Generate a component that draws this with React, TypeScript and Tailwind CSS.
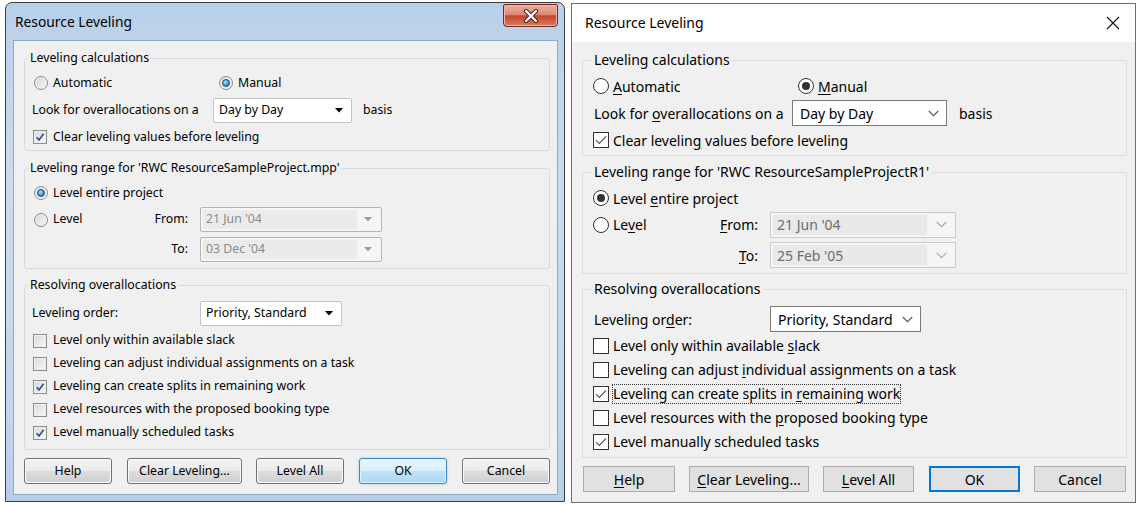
import React from "react";

type Kids = { children?: React.ReactNode };

const U = ({ children }: Kids) => (
  <span className="underline decoration-1 underline-offset-[2px]">{children}</span>
);

/* ---------------- Windows 7 styled controls ---------------- */

function R7({ checked }: { checked?: boolean }) {
  return (
    <span className="flex h-[14px] w-[14px] shrink-0 items-center justify-center rounded-full border border-[#8b8b8b] bg-[linear-gradient(135deg,#d4d4d4,#f8f8f8)] shadow-[inset_0_0_0_1px_#f2f2f2]">
      {checked && (
        <span className="h-[8px] w-[8px] rounded-full border border-[#1b4f86] bg-[radial-gradient(circle_at_40%_35%,#b6e6ff,#3d97d8_55%,#14599a)]" />
      )}
    </span>
  );
}

function C7({ checked }: { checked?: boolean }) {
  return (
    <span className="flex h-[14px] w-[14px] shrink-0 items-center justify-center border border-[#8b8b8b] bg-[linear-gradient(135deg,#d8d8d8,#fafafa)] shadow-[inset_0_0_0_1px_#f0f0f0]">
      {checked && (
        <svg width="10" height="10" viewBox="0 0 10 10">
          <path d="M1.6 5.2 L4 7.9 L8.6 1.8" fill="none" stroke="#33508e" strokeWidth="1.7" />
        </svg>
      )}
    </span>
  );
}

function Combo7({ value, w, disabled }: { value: string; w: string; disabled?: boolean }) {
  if (disabled) {
    return (
      <div className={`flex h-[25px] rounded-[2px] border border-[#b2b6b9] bg-[#f5f5f5] p-[2px] ${w}`}>
        <div className="flex flex-1 items-center bg-[#ebebeb] pl-[3px] text-[#8c8c8c]">{value}</div>
        <div className="flex w-[22px] items-center justify-center">
          <svg width="8" height="5" viewBox="0 0 8 5">
            <path d="M0 0H8L4 4.5Z" fill="#9c9c9c" />
          </svg>
        </div>
      </div>
    );
  }
  return (
    <div className={`flex h-[25px] items-center rounded-[2px] border border-[#c4c4c4] bg-white pl-[5px] pr-[8px] ${w}`}>
      <span className="flex-1">{value}</span>
      <svg width="8" height="5" viewBox="0 0 8 5">
        <path d="M0 0H8L4 4.5Z" fill="#000" />
      </svg>
    </div>
  );
}

function B7({ label, w, ok, ml }: { label: string; w: string; ok?: boolean; ml: string }) {
  return (
    <div
      className={`flex h-[26px] items-center justify-center rounded-[3px] border ${ml} ${w} ${
        ok
          ? "border-[#3c8bc4] bg-[linear-gradient(#e9f6fd,#d9effb_50%,#bfe4f8_50%,#a9d9f3)] shadow-[0_0_3px_#8fd0f2,inset_0_0_0_1px_#dff2fc]"
          : "border-[#707070] bg-[linear-gradient(#f3f3f3,#ebebeb_50%,#dddddd_50%,#cfcfcf)] shadow-[inset_0_0_0_1px_#fbfbfb]"
      }`}
    >
      {label}
    </div>
  );
}

function Win7Dialog() {
  return (
    <div className="ml-[5px] mt-[2px] flex h-[500px] w-[560px] shrink-0 flex-col rounded-t-[7px] border border-[#3d3d3d] bg-[linear-gradient(180deg,#b8d0ea,#cadcf0_35%,#c2d8ee_80%,#b7cfe8)] pb-[6px] pl-[7px] pr-[6px] text-[12.3px] text-black">
      {/* title bar */}
      <div className="flex h-[37px] shrink-0 items-start justify-between">
        <span className="ml-[2px] mt-[10px] text-[13.8px] leading-[18px]">Resource Leveling</span>
        <div className="mt-[1px] flex h-[23px] w-[55px] items-center justify-center rounded-b-[4px] rounded-t-[2px] border border-[#6f2a20] bg-[linear-gradient(#eab0a2,#dc8a76_45%,#c8452f_52%,#d77a5c)] shadow-[inset_0_0_0_1px_#f0b8a8]">
          <svg width="16" height="14" viewBox="0 0 16 14">
            <path d="M3 2 L13 12 M13 2 L3 12" stroke="#4a1b12" strokeWidth="4.2" strokeLinecap="round" />
            <path d="M3 2 L13 12 M13 2 L3 12" stroke="#ffffff" strokeWidth="2.4" strokeLinecap="round" />
          </svg>
        </div>
      </div>

      {/* client */}
      <div className="flex flex-1 flex-col border border-[#94a8bf] bg-[#f0f0f0] pl-[10px] pr-[7px]">
        {/* group 1 */}
        <fieldset className="mt-[8px] h-[102px] rounded-[3px] border border-[#d3dce3]">
          <legend className="ml-[3px] px-[2px] leading-[18px]">Leveling calculations</legend>
          <div className="px-[7px]">
            <div className="mt-[3px] flex h-[26px] items-center">
              <div className="ml-[2px] flex w-[185px] items-center gap-[5px]">
                <R7 />
                <span>Automatic</span>
              </div>
              <div className="flex items-center gap-[5px]">
                <R7 checked />
                <span>Manual</span>
              </div>
            </div>
            <div className="flex h-[28px] items-center">
              <span className="w-[181px]">Look for overallocations on a</span>
              <Combo7 value="Day by Day" w="w-[139px]" />
              <span className="ml-[11px]">basis</span>
            </div>
            <div className="flex h-[26px] items-center gap-[6px] pl-[1px]">
              <C7 checked />
              <span>Clear leveling values before leveling</span>
            </div>
          </div>
        </fieldset>

        {/* group 2 */}
        <fieldset className="mt-[8px] h-[110px] rounded-[3px] border border-[#d3dce3]">
          <legend className="ml-[3px] px-[2px] leading-[18px]">Leveling range for 'RWC ResourceSampleProject.mpp'</legend>
          <div className="px-[7px]">
            <div className="mt-[3px] flex h-[26px] items-center gap-[5px] pl-[2px]">
              <R7 checked />
              <span>Level entire project</span>
            </div>
            <div className="flex h-[27px] items-center">
              <div className="flex w-[156px] items-center justify-between">
                <div className="ml-[2px] flex items-center gap-[5px]">
                  <R7 />
                  <span>Level</span>
                </div>
                <span>From:</span>
              </div>
              <Combo7 value="21 Jun '04" w="ml-[12px] w-[182px]" disabled />
            </div>
            <div className="mt-[3px] flex h-[26px] items-center">
              <span className="w-[156px] text-right">To:</span>
              <Combo7 value="03 Dec '04" w="ml-[12px] w-[182px]" disabled />
            </div>
          </div>
        </fieldset>

        {/* group 3 */}
        <fieldset className="mt-[7px] h-[174px] rounded-[3px] border border-[#d3dce3]">
          <legend className="ml-[3px] px-[2px] leading-[18px]">Resolving overallocations</legend>
          <div className="px-[7px]">
            <div className="mt-[6px] flex h-[26px] items-center">
              <span className="w-[168px]">Leveling order:</span>
              <Combo7 value="Priority, Standard" w="w-[142px]" />
            </div>
            <div className="mt-[3px] flex flex-col">
              {[
                ["Level only within available slack", false],
                ["Leveling can adjust individual assignments on a task", false],
                ["Leveling can create splits in remaining work", true],
                ["Level resources with the proposed booking type", false],
                ["Level manually scheduled tasks", true],
              ].map(([t, c]) => (
                <div key={t as string} className="flex h-[23px] items-center gap-[6px] pl-[1px]">
                  <C7 checked={c as boolean} />
                  <span>{t as string}</span>
                </div>
              ))}
            </div>
          </div>
        </fieldset>

        {/* buttons */}
        <div className="mt-[8px] flex h-[26px]">
          <B7 label="Help" w="w-[88px]" ml="ml-0" />
          <B7 label="Clear Leveling..." w="w-[115px]" ml="ml-[15px]" />
          <B7 label="Level All" w="w-[88px]" ml="ml-[14px]" />
          <B7 label="OK" w="w-[88px]" ml="ml-[15px]" ok />
          <B7 label="Cancel" w="w-[88px]" ml="ml-[15px]" />
        </div>
      </div>
    </div>
  );
}

/* ---------------- Windows 10 styled controls ---------------- */

function R10({ checked }: { checked?: boolean }) {
  return (
    <span className="flex h-[16px] w-[16px] shrink-0 items-center justify-center rounded-full border border-[#333333] bg-white">
      {checked && <span className="h-[8px] w-[8px] rounded-full bg-[#333333]" />}
    </span>
  );
}

function C10({ checked }: { checked?: boolean }) {
  return (
    <span className="flex h-[16px] w-[16px] shrink-0 items-center justify-center border border-[#333333] bg-white">
      {checked && (
        <svg width="14" height="14" viewBox="0 0 14 14">
          <path d="M2 7.2 L5.3 10.5 L12 3.4" fill="none" stroke="#555555" strokeWidth="1.2" />
        </svg>
      )}
    </span>
  );
}

function Chevron({ color }: { color: string }) {
  return (
    <svg width="11" height="7" viewBox="0 0 11 7">
      <path d="M0.8 1 L5.5 5.7 L10.2 1" fill="none" stroke={color} strokeWidth="1.1" />
    </svg>
  );
}

function Combo10({ value, w, disabled }: { value: string; w: string; disabled?: boolean }) {
  if (disabled) {
    return (
      <div className={`flex h-[26px] border border-[#cccccc] bg-[#f5f5f5] p-[2px] ${w}`}>
        <div className="flex flex-1 items-center bg-[#e9e9e9] pl-[4px] text-[#6d6d6d]">{value}</div>
        <div className="flex w-[26px] items-center justify-center pl-[2px]">
          <Chevron color="#a8a8a8" />
        </div>
      </div>
    );
  }
  return (
    <div className={`flex h-[26px] items-center border border-[#7a7a7a] bg-white pl-[7px] pr-[7px] ${w}`}>
      <span className="flex-1">{value}</span>
      <Chevron color="#555555" />
    </div>
  );
}

function B10({ children, w, ok, ml }: { children: React.ReactNode; w: string; ok?: boolean; ml: string }) {
  return (
    <div
      className={`flex h-[26px] items-center justify-center bg-[#e1e1e1] ${ml} ${w} ${
        ok ? "border-2 border-[#0078d7]" : "border border-[#adadad]"
      }`}
    >
      {children}
    </div>
  );
}

function Win10Dialog() {
  const checks: [React.ReactNode, boolean, boolean][] = [
    [<>Level only within available <U>s</U>lack</>, false, false],
    [<>Leveling can adjust <U>i</U>ndividual assignments on a task</>, false, false],
    [<>Leveling can create splits in <U>r</U>emaining work</>, true, true],
    [<>Level resources with the <U>p</U>roposed booking type</>, false, false],
    [<>Level manually scheduled tasks</>, true, false],
  ];
  return (
    <div className="ml-[6px] mt-[3px] flex h-[500px] w-[565px] shrink-0 flex-col border border-[#6f6f6f] bg-white text-[14px] text-black">
      {/* title bar */}
      <div className="flex h-[38px] shrink-0 items-center justify-between">
        <span className="ml-[13px] leading-[20px]">Resource Leveling</span>
        <div className="flex h-full w-[44px] items-center justify-center">
          <svg width="14" height="14" viewBox="0 0 14 14">
            <path d="M1 1 L13 13 M13 1 L1 13" stroke="#111111" strokeWidth="1.1" />
          </svg>
        </div>
      </div>

      {/* client */}
      <div className="flex flex-1 flex-col bg-[#f0f0f0] pl-[10px] pr-[8px]">
        {/* group 1 */}
        <fieldset className="mt-[8px] h-[106px] border border-[#dcdcdc]">
          <legend className="ml-[8px] px-[3px] leading-[20px]">Leveling calculations</legend>
          <div className="px-[10px]">
            <div className="mt-[3px] flex h-[26px] items-center">
              <div className="flex w-[205px] items-center gap-[4px]">
                <R10 />
                <span>
                  <U>A</U>utomatic
                </span>
              </div>
              <div className="flex items-center gap-[4px]">
                <R10 checked />
                <span>
                  <U>M</U>anual
                </span>
              </div>
            </div>
            <div className="flex h-[28px] items-center">
              <span className="w-[199px] pl-[1px]">
                Look for <U>o</U>verallocations on a
              </span>
              <Combo10 value="Day by Day" w="w-[155px]" />
              <span className="ml-[12px]">basis</span>
            </div>
            <div className="flex h-[26px] items-center gap-[4px]">
              <C10 checked />
              <span>
                Clear levelin<U>g</U> values before leveling
              </span>
            </div>
          </div>
        </fieldset>

        {/* group 2 */}
        <fieldset className="mt-[6px] h-[112px] border border-[#dcdcdc]">
          <legend className="ml-[8px] px-[3px] leading-[20px]">Leveling range for 'RWC ResourceSampleProjectR1'</legend>
          <div className="px-[10px]">
            <div className="mt-[3px] flex h-[26px] items-center gap-[4px]">
              <R10 checked />
              <span>
                Level <U>e</U>ntire project
              </span>
            </div>
            <div className="flex h-[27px] items-center">
              <div className="flex w-[165px] items-center justify-between">
                <div className="flex items-center gap-[4px]">
                  <R10 />
                  <span>
                    Le<U>v</U>el
                  </span>
                </div>
                <span>
                  <U>F</U>rom:
                </span>
              </div>
              <Combo10 value="21 Jun '04" w="ml-[12px] w-[186px]" disabled />
            </div>
            <div className="mt-[4px] flex h-[26px] items-center">
              <span className="w-[165px] text-right">
                <U>T</U>o:
              </span>
              <Combo10 value="25 Feb '05" w="ml-[12px] w-[186px]" disabled />
            </div>
          </div>
        </fieldset>

        {/* group 3 */}
        <fieldset className="mt-[5px] h-[179px] border border-[#dcdcdc]">
          <legend className="ml-[8px] px-[3px] leading-[20px]">Resolving overallocations</legend>
          <div className="px-[10px]">
            <div className="mt-[7px] flex h-[26px] items-center">
              <span className="w-[177px] pl-[1px]">
                Leveling or<U>d</U>er:
              </span>
              <Combo10 value="Priority, Standard" w="w-[151px]" />
            </div>
            <div className="mt-[2px] flex flex-col">
              {checks.map(([t, c, focus], i) => (
                <div key={i} className="flex h-[24px] items-center gap-[4px]">
                  <C10 checked={c} />
                  <span className={focus ? "leading-[18px] outline-1 outline-dotted outline-[#333333]" : "leading-[18px]"}>
                    {t}
                  </span>
                </div>
              ))}
            </div>
          </div>
        </fieldset>

        {/* buttons */}
        <div className="ml-[1px] mt-[8px] flex h-[26px]">
          <B10 w="w-[92px]" ml="ml-0">
            <U>H</U>elp
          </B10>
          <B10 w="w-[120px]" ml="ml-[14px]">
            <U>C</U>lear Leveling...
          </B10>
          <B10 w="w-[91px]" ml="ml-[14px]">
            <U>L</U>evel All
          </B10>
          <B10 w="w-[91px]" ml="ml-[15px]" ok>
            OK
          </B10>
          <B10 w="w-[92px]" ml="ml-[14px]">
            Cancel
          </B10>
        </div>
      </div>
    </div>
  );
}

export default function App() {
  return (
    <div className="flex h-[506px] w-[1140px] items-start overflow-hidden bg-white font-['Noto_Sans',sans-serif]">
      <Win7Dialog />
      <Win10Dialog />
    </div>
  );
}
